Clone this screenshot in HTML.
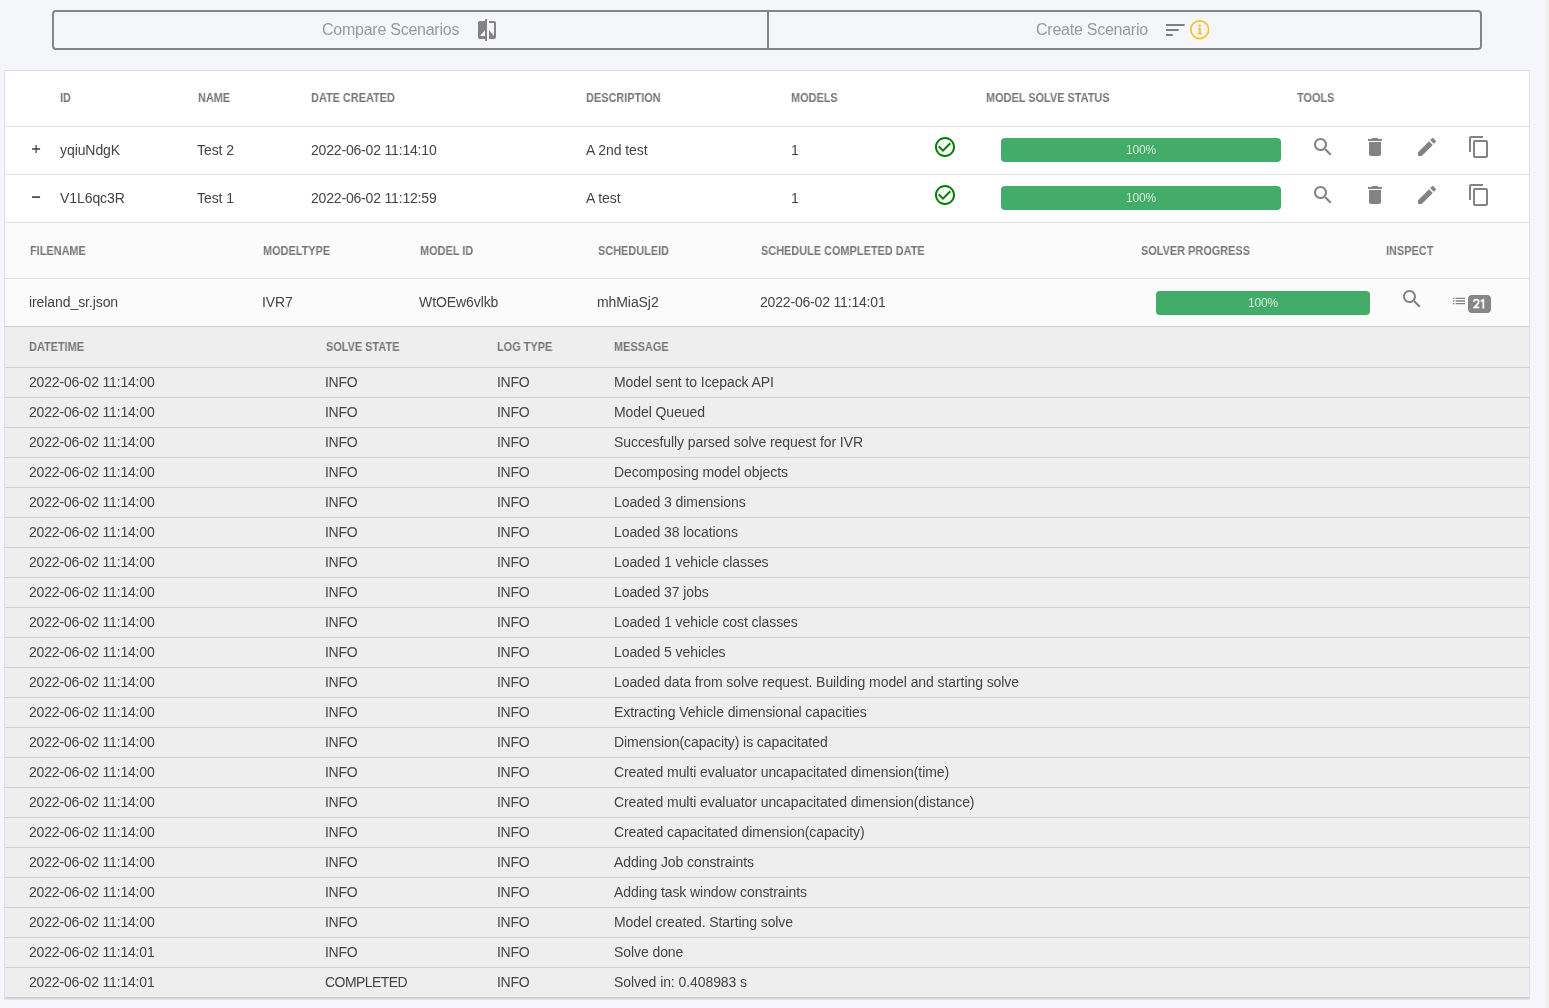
<!DOCTYPE html>
<html><head><meta charset="utf-8">
<style>
html,body{margin:0;padding:0;}
body{width:1549px;height:1008px;overflow:hidden;background:#f5f6fa;font-family:"Liberation Sans",sans-serif;position:relative;color:#444444;}
.abs{position:absolute;}
.sb{position:absolute;left:1545px;top:0;width:4px;height:1008px;background:#efefef;}
.btnbox{position:absolute;left:52px;top:10px;width:1426px;height:36px;border:2px solid #848484;border-radius:4px;}
.divider{position:absolute;left:767px;top:10px;width:2px;height:40px;background:#848484;}
.btxt{will-change:transform;position:absolute;top:10px;height:40px;line-height:40px;font-size:16px;color:#9a9a9a;white-space:nowrap;letter-spacing:-0.25px;}
.card{position:absolute;left:4px;top:70px;width:1524px;height:927px;border:1px solid #dde1e6;border-bottom-color:#d9d9d9;box-shadow:0 1px 0 #e6e7ea;background:#fff;}
.line{position:absolute;left:5px;width:1524px;height:1px;}
.h{will-change:transform;position:absolute;font-size:12px;line-height:14px;font-weight:700;color:#777777;white-space:nowrap;transform-origin:0 0;}
.t{will-change:transform;position:absolute;font-size:14px;color:#444444;white-space:nowrap;}
.pb{will-change:transform;position:absolute;background:#43ac6a;border-radius:4px;color:#d4ecdc;font-size:12px;text-align:center;letter-spacing:-0.2px;}
</style></head><body>
<div class="sb"></div>
<div class="btnbox"></div><div class="divider"></div>
<div class="btxt" style="left:322px;">Compare Scenarios</div>
<svg class="abs" style="left:475.4px;top:18px;width:24px;height:24px;fill:#838383" viewBox="0 0 24 24"><path d="M10 3H5c-1.11 0-2 .89-2 2v14c0 1.1.89 2 2 2h5v2h2V1h-2v2zm0 15H5l5-6v6zm9-15h-5v2h5v13l-5-6v9h5c1.1 0 2-.9 2-2V5c0-1.1-.9-2-2-2z"/></svg>
<div class="btxt" style="left:1036px;">Create Scenario</div>
<svg class="abs" style="left:1163px;top:18px;width:24px;height:24px;fill:#808080" viewBox="0 0 24 24"><path d="M3 18h6.8v-2H3v2zM3 6v2h18.6V6H3zm0 7h12.7v-2H3v2z"/></svg>
<svg class="abs" style="left:1188.3px;top:17.8px;width:23.4px;height:23.4px;fill:#fbc02d" viewBox="0 0 24 24"><circle cx="12" cy="12" r="9.1" fill="none" stroke="#fbc02d" stroke-width="1.8"/><circle cx="12" cy="7.9" r="1.3"/><path d="M10.3 10.1h2.8v5.2h1.2v1.6h-4.4v-1.6h1.1v-3.6h-0.7z"/></svg>
<div class="card"></div>
<div class="h" style="left:60px;top:91px;transform:scaleX(0.91)">ID</div>
<div class="h" style="left:198px;top:91px;transform:scaleX(0.91)">NAME</div>
<div class="h" style="left:311px;top:91px;transform:scaleX(0.91)">DATE CREATED</div>
<div class="h" style="left:586px;top:91px;transform:scaleX(0.91)">DESCRIPTION</div>
<div class="h" style="left:791px;top:91px;transform:scaleX(0.91)">MODELS</div>
<div class="h" style="left:986px;top:91px;transform:scaleX(0.91)">MODEL SOLVE STATUS</div>
<div class="h" style="left:1297px;top:91px;transform:scaleX(0.91)">TOOLS</div>
<div class="line" style="top:126px;background:#e0e0e0"></div>
<svg class="abs" style="left:30px;top:143px;width:12px;height:12px" viewBox="0 0 12 12"><path d="M2.1 6H10.1" stroke="#3a3a3a" stroke-width="1.5" fill="none"/><path d="M6.1 2V10" stroke="#3a3a3a" stroke-width="1.2" fill="none"/></svg>
<div class="t" style="left:60px;top:126px;line-height:48px;letter-spacing:-0.08px;">yqiuNdgK</div>
<div class="t" style="left:197px;top:126px;line-height:48px;letter-spacing:-0.08px;">Test 2</div>
<div class="t" style="left:311px;top:126px;line-height:48px;letter-spacing:-0.18px;">2022-06-02 11:14:10</div>
<div class="t" style="left:586px;top:126px;line-height:48px;letter-spacing:-0.08px;">A 2nd test</div>
<div class="t" style="left:791px;top:126px;line-height:48px;">1</div>
<svg class="abs" style="left:933px;top:135px;width:24px;height:24px;fill:#008000" viewBox="0 0 24 24"><path d="M16.59 7.58L10 14.17l-3.59-3.58L5 12l5 5 8-8zM12 2C6.48 2 2 6.48 2 12s4.48 10 10 10 10-4.48 10-10S17.52 2 12 2zm0 18c-4.42 0-8-3.58-8-8s3.58-8 8-8 8 3.58 8 8-3.58 8-8 8z"/></svg>
<div class="pb" style="left:1001px;top:138px;width:280px;height:24px;line-height:24px;">100%</div>
<svg class="abs" style="left:1311px;top:135px;width:24px;height:24px;fill:#838383" viewBox="0 0 24 24"><path d="M15.5 14h-.79l-.28-.27C15.41 12.59 16 11.11 16 9.5 16 5.91 13.09 3 9.5 3S3 5.91 3 9.5 5.91 16 9.5 16c1.61 0 3.09-.59 4.23-1.57l.27.28v.79l5 4.99L20.49 19l-4.99-5zm-6 0C7.01 14 5 11.990 5 9.5S7.01 5 9.5 5 14 7.01 14 9.5 11.99 14 9.5 14z"/></svg>
<svg class="abs" style="left:1363px;top:135px;width:24px;height:24px;fill:#838383" viewBox="0 0 24 24"><path d="M6 19c0 1.1.9 2 2 2h8c1.1 0 2-.9 2-2V7H6v12zM19 4h-3.5l-1-1h-5l-1 1H5v2h14V4z"/></svg>
<svg class="abs" style="left:1415px;top:135px;width:24px;height:24px;fill:#838383" viewBox="0 0 24 24"><path d="M3 17.25V21h3.75L17.81 9.94l-3.75-3.75L3 17.25zM20.71 7.04c.39-.39.39-1.02 0-1.41l-2.34-2.34c-.39-.39-1.02-.39-1.41 0l-1.83 1.83 3.75 3.75 1.83-1.83z"/></svg>
<svg class="abs" style="left:1467px;top:135px;width:24px;height:24px;fill:#838383" viewBox="0 0 24 24"><path d="M16 1H4c-1.1 0-2 .9-2 2v14h2V3h12V1zm3 4H8c-1.1 0-2 .9-2 2v14c0 1.1.9 2 2 2h11c1.1 0 2-.9 2-2V7c0-1.1-.9-2-2-2zm0 16H8V7h11v14z"/></svg>
<div class="line" style="top:174px;background:#e0e0e0"></div>
<svg class="abs" style="left:30px;top:191px;width:12px;height:12px" viewBox="0 0 12 12"><path d="M2.1 6.1H10.1" stroke="#444" stroke-width="1.7" fill="none"/></svg>
<div class="t" style="left:60px;top:174px;line-height:48px;letter-spacing:-0.08px;">V1L6qc3R</div>
<div class="t" style="left:197px;top:174px;line-height:48px;letter-spacing:-0.08px;">Test 1</div>
<div class="t" style="left:311px;top:174px;line-height:48px;letter-spacing:-0.18px;">2022-06-02 11:12:59</div>
<div class="t" style="left:586px;top:174px;line-height:48px;letter-spacing:-0.08px;">A test</div>
<div class="t" style="left:791px;top:174px;line-height:48px;">1</div>
<svg class="abs" style="left:933px;top:183px;width:24px;height:24px;fill:#008000" viewBox="0 0 24 24"><path d="M16.59 7.58L10 14.17l-3.59-3.58L5 12l5 5 8-8zM12 2C6.48 2 2 6.48 2 12s4.48 10 10 10 10-4.48 10-10S17.52 2 12 2zm0 18c-4.42 0-8-3.58-8-8s3.58-8 8-8 8 3.58 8 8-3.58 8-8 8z"/></svg>
<div class="pb" style="left:1001px;top:186px;width:280px;height:24px;line-height:24px;">100%</div>
<svg class="abs" style="left:1311px;top:183px;width:24px;height:24px;fill:#838383" viewBox="0 0 24 24"><path d="M15.5 14h-.79l-.28-.27C15.41 12.59 16 11.11 16 9.5 16 5.91 13.09 3 9.5 3S3 5.91 3 9.5 5.91 16 9.5 16c1.61 0 3.09-.59 4.23-1.57l.27.28v.79l5 4.99L20.49 19l-4.99-5zm-6 0C7.01 14 5 11.990 5 9.5S7.01 5 9.5 5 14 7.01 14 9.5 11.99 14 9.5 14z"/></svg>
<svg class="abs" style="left:1363px;top:183px;width:24px;height:24px;fill:#838383" viewBox="0 0 24 24"><path d="M6 19c0 1.1.9 2 2 2h8c1.1 0 2-.9 2-2V7H6v12zM19 4h-3.5l-1-1h-5l-1 1H5v2h14V4z"/></svg>
<svg class="abs" style="left:1415px;top:183px;width:24px;height:24px;fill:#838383" viewBox="0 0 24 24"><path d="M3 17.25V21h3.75L17.81 9.94l-3.75-3.75L3 17.25zM20.71 7.04c.39-.39.39-1.02 0-1.41l-2.34-2.34c-.39-.39-1.02-.39-1.41 0l-1.83 1.83 3.75 3.75 1.83-1.83z"/></svg>
<svg class="abs" style="left:1467px;top:183px;width:24px;height:24px;fill:#838383" viewBox="0 0 24 24"><path d="M16 1H4c-1.1 0-2 .9-2 2v14h2V3h12V1zm3 4H8c-1.1 0-2 .9-2 2v14c0 1.1.9 2 2 2h11c1.1 0 2-.9 2-2V7c0-1.1-.9-2-2-2zm0 16H8V7h11v14z"/></svg>
<div class="line" style="top:222px;background:#e0e0e0"></div>
<div class="abs" style="left:5px;top:223px;width:1524px;height:103px;background:#fbfbfb;"></div>
<div class="h" style="left:30px;top:244px;transform:scaleX(0.91)">FILENAME</div>
<div class="h" style="left:263px;top:244px;transform:scaleX(0.91)">MODELTYPE</div>
<div class="h" style="left:420px;top:244px;transform:scaleX(0.91)">MODEL ID</div>
<div class="h" style="left:598px;top:244px;transform:scaleX(0.91)">SCHEDULEID</div>
<div class="h" style="left:761px;top:244px;transform:scaleX(0.91)">SCHEDULE COMPLETED DATE</div>
<div class="h" style="left:1141px;top:244px;transform:scaleX(0.91)">SOLVER PROGRESS</div>
<div class="h" style="left:1386px;top:244px;transform:scaleX(0.91)">INSPECT</div>
<div class="line" style="top:278px;background:#e0e0e0"></div>
<div class="t" style="left:29px;top:278px;line-height:48px;letter-spacing:-0.08px;">ireland_sr.json</div>
<div class="t" style="left:262px;top:278px;line-height:48px;letter-spacing:-0.08px;">IVR7</div>
<div class="t" style="left:419px;top:278px;line-height:48px;letter-spacing:-0.08px;">WtOEw6vlkb</div>
<div class="t" style="left:597px;top:278px;line-height:48px;letter-spacing:-0.08px;">mhMiaSj2</div>
<div class="t" style="left:760px;top:278px;line-height:48px;letter-spacing:-0.18px;">2022-06-02 11:14:01</div>
<div class="pb" style="left:1156px;top:291px;width:214px;height:24px;line-height:24px;">100%</div>
<svg class="abs" style="left:1399.5px;top:287px;width:24px;height:24px;fill:#838383" viewBox="0 0 24 24"><path d="M15.5 14h-.79l-.28-.27C15.41 12.59 16 11.11 16 9.5 16 5.91 13.09 3 9.5 3S3 5.91 3 9.5 5.91 16 9.5 16c1.61 0 3.09-.59 4.23-1.57l.27.28v.79l5 4.99L20.49 19l-4.99-5zm-6 0C7.01 14 5 11.990 5 9.5S7.01 5 9.5 5 14 7.01 14 9.5 11.99 14 9.5 14z"/></svg>
<svg class="abs" style="left:1451.3px;top:293px;width:16px;height:16px;fill:#838383" viewBox="0 0 24 24"><path d="M3 13h2v-2H3v2zm0 4h2v-2H3v2zm0-8h2V7H3v2zm4 4h14v-2H7v2zm0 4h14v-2H7v2zM7 7v2h14V7H7z"/></svg>
<div class="abs" style="left:1468px;top:295px;width:23px;height:18px;border-radius:4px;background:#878787;"></div>
<svg class="abs" style="left:1468px;top:295px;width:23px;height:18px" viewBox="0 0 23 18"><g transform="translate(0.2 0.7)"><path d="M5.6 6.3C5.6 4.8 6.6 3.9 8.1 3.9C9.6 3.9 10.5 4.8 10.5 6.0C10.5 7.0 10.0 7.6 9.2 8.5L6.3 11.7H11.1" fill="none" stroke="#fff" stroke-width="1.75" stroke-linejoin="miter"/><path d="M12.5 5.6L15.1 4.2V12.9" fill="none" stroke="#fff" stroke-width="1.8"/></g></svg>
<div class="line" style="top:326px;background:#d0d0d0"></div>
<div class="abs" style="left:5px;top:327px;width:1524px;height:670px;background:#eeeeee;"></div>
<div class="h" style="left:29px;top:340px;transform:scaleX(0.91)">DATETIME</div>
<div class="h" style="left:326px;top:340px;transform:scaleX(0.91)">SOLVE STATE</div>
<div class="h" style="left:497px;top:340px;transform:scaleX(0.91)">LOG TYPE</div>
<div class="h" style="left:614px;top:340px;transform:scaleX(0.91)">MESSAGE</div>
<div class="line" style="top:367px;background:#d0d0d0"></div>
<div class="t" style="left:29px;top:367px;line-height:30px;letter-spacing:-0.18px;">2022-06-02 11:14:00</div>
<div class="t" style="left:325px;top:367px;line-height:30px;letter-spacing:-0.3px;">INFO</div>
<div class="t" style="left:497px;top:367px;line-height:30px;letter-spacing:-0.3px;">INFO</div>
<div class="t" style="left:614px;top:367px;line-height:30px;letter-spacing:-0.08px;">Model sent to Icepack API</div>
<div class="line" style="top:397px;background:#d0d0d0"></div>
<div class="t" style="left:29px;top:397px;line-height:30px;letter-spacing:-0.18px;">2022-06-02 11:14:00</div>
<div class="t" style="left:325px;top:397px;line-height:30px;letter-spacing:-0.3px;">INFO</div>
<div class="t" style="left:497px;top:397px;line-height:30px;letter-spacing:-0.3px;">INFO</div>
<div class="t" style="left:614px;top:397px;line-height:30px;letter-spacing:-0.08px;">Model Queued</div>
<div class="line" style="top:427px;background:#d0d0d0"></div>
<div class="t" style="left:29px;top:427px;line-height:30px;letter-spacing:-0.18px;">2022-06-02 11:14:00</div>
<div class="t" style="left:325px;top:427px;line-height:30px;letter-spacing:-0.3px;">INFO</div>
<div class="t" style="left:497px;top:427px;line-height:30px;letter-spacing:-0.3px;">INFO</div>
<div class="t" style="left:614px;top:427px;line-height:30px;letter-spacing:-0.08px;">Succesfully parsed solve request for IVR</div>
<div class="line" style="top:457px;background:#d0d0d0"></div>
<div class="t" style="left:29px;top:457px;line-height:30px;letter-spacing:-0.18px;">2022-06-02 11:14:00</div>
<div class="t" style="left:325px;top:457px;line-height:30px;letter-spacing:-0.3px;">INFO</div>
<div class="t" style="left:497px;top:457px;line-height:30px;letter-spacing:-0.3px;">INFO</div>
<div class="t" style="left:614px;top:457px;line-height:30px;letter-spacing:-0.08px;">Decomposing model objects</div>
<div class="line" style="top:487px;background:#d0d0d0"></div>
<div class="t" style="left:29px;top:487px;line-height:30px;letter-spacing:-0.18px;">2022-06-02 11:14:00</div>
<div class="t" style="left:325px;top:487px;line-height:30px;letter-spacing:-0.3px;">INFO</div>
<div class="t" style="left:497px;top:487px;line-height:30px;letter-spacing:-0.3px;">INFO</div>
<div class="t" style="left:614px;top:487px;line-height:30px;letter-spacing:-0.08px;">Loaded 3 dimensions</div>
<div class="line" style="top:517px;background:#d0d0d0"></div>
<div class="t" style="left:29px;top:517px;line-height:30px;letter-spacing:-0.18px;">2022-06-02 11:14:00</div>
<div class="t" style="left:325px;top:517px;line-height:30px;letter-spacing:-0.3px;">INFO</div>
<div class="t" style="left:497px;top:517px;line-height:30px;letter-spacing:-0.3px;">INFO</div>
<div class="t" style="left:614px;top:517px;line-height:30px;letter-spacing:-0.08px;">Loaded 38 locations</div>
<div class="line" style="top:547px;background:#d0d0d0"></div>
<div class="t" style="left:29px;top:547px;line-height:30px;letter-spacing:-0.18px;">2022-06-02 11:14:00</div>
<div class="t" style="left:325px;top:547px;line-height:30px;letter-spacing:-0.3px;">INFO</div>
<div class="t" style="left:497px;top:547px;line-height:30px;letter-spacing:-0.3px;">INFO</div>
<div class="t" style="left:614px;top:547px;line-height:30px;letter-spacing:-0.08px;">Loaded 1 vehicle classes</div>
<div class="line" style="top:577px;background:#d0d0d0"></div>
<div class="t" style="left:29px;top:577px;line-height:30px;letter-spacing:-0.18px;">2022-06-02 11:14:00</div>
<div class="t" style="left:325px;top:577px;line-height:30px;letter-spacing:-0.3px;">INFO</div>
<div class="t" style="left:497px;top:577px;line-height:30px;letter-spacing:-0.3px;">INFO</div>
<div class="t" style="left:614px;top:577px;line-height:30px;letter-spacing:-0.08px;">Loaded 37 jobs</div>
<div class="line" style="top:607px;background:#d0d0d0"></div>
<div class="t" style="left:29px;top:607px;line-height:30px;letter-spacing:-0.18px;">2022-06-02 11:14:00</div>
<div class="t" style="left:325px;top:607px;line-height:30px;letter-spacing:-0.3px;">INFO</div>
<div class="t" style="left:497px;top:607px;line-height:30px;letter-spacing:-0.3px;">INFO</div>
<div class="t" style="left:614px;top:607px;line-height:30px;letter-spacing:-0.08px;">Loaded 1 vehicle cost classes</div>
<div class="line" style="top:637px;background:#d0d0d0"></div>
<div class="t" style="left:29px;top:637px;line-height:30px;letter-spacing:-0.18px;">2022-06-02 11:14:00</div>
<div class="t" style="left:325px;top:637px;line-height:30px;letter-spacing:-0.3px;">INFO</div>
<div class="t" style="left:497px;top:637px;line-height:30px;letter-spacing:-0.3px;">INFO</div>
<div class="t" style="left:614px;top:637px;line-height:30px;letter-spacing:-0.08px;">Loaded 5 vehicles</div>
<div class="line" style="top:667px;background:#d0d0d0"></div>
<div class="t" style="left:29px;top:667px;line-height:30px;letter-spacing:-0.18px;">2022-06-02 11:14:00</div>
<div class="t" style="left:325px;top:667px;line-height:30px;letter-spacing:-0.3px;">INFO</div>
<div class="t" style="left:497px;top:667px;line-height:30px;letter-spacing:-0.3px;">INFO</div>
<div class="t" style="left:614px;top:667px;line-height:30px;letter-spacing:-0.08px;">Loaded data from solve request. Building model and starting solve</div>
<div class="line" style="top:697px;background:#d0d0d0"></div>
<div class="t" style="left:29px;top:697px;line-height:30px;letter-spacing:-0.18px;">2022-06-02 11:14:00</div>
<div class="t" style="left:325px;top:697px;line-height:30px;letter-spacing:-0.3px;">INFO</div>
<div class="t" style="left:497px;top:697px;line-height:30px;letter-spacing:-0.3px;">INFO</div>
<div class="t" style="left:614px;top:697px;line-height:30px;letter-spacing:-0.08px;">Extracting Vehicle dimensional capacities</div>
<div class="line" style="top:727px;background:#d0d0d0"></div>
<div class="t" style="left:29px;top:727px;line-height:30px;letter-spacing:-0.18px;">2022-06-02 11:14:00</div>
<div class="t" style="left:325px;top:727px;line-height:30px;letter-spacing:-0.3px;">INFO</div>
<div class="t" style="left:497px;top:727px;line-height:30px;letter-spacing:-0.3px;">INFO</div>
<div class="t" style="left:614px;top:727px;line-height:30px;letter-spacing:-0.08px;">Dimension(capacity) is capacitated</div>
<div class="line" style="top:757px;background:#d0d0d0"></div>
<div class="t" style="left:29px;top:757px;line-height:30px;letter-spacing:-0.18px;">2022-06-02 11:14:00</div>
<div class="t" style="left:325px;top:757px;line-height:30px;letter-spacing:-0.3px;">INFO</div>
<div class="t" style="left:497px;top:757px;line-height:30px;letter-spacing:-0.3px;">INFO</div>
<div class="t" style="left:614px;top:757px;line-height:30px;letter-spacing:-0.08px;">Created multi evaluator uncapacitated dimension(time)</div>
<div class="line" style="top:787px;background:#d0d0d0"></div>
<div class="t" style="left:29px;top:787px;line-height:30px;letter-spacing:-0.18px;">2022-06-02 11:14:00</div>
<div class="t" style="left:325px;top:787px;line-height:30px;letter-spacing:-0.3px;">INFO</div>
<div class="t" style="left:497px;top:787px;line-height:30px;letter-spacing:-0.3px;">INFO</div>
<div class="t" style="left:614px;top:787px;line-height:30px;letter-spacing:-0.08px;">Created multi evaluator uncapacitated dimension(distance)</div>
<div class="line" style="top:817px;background:#d0d0d0"></div>
<div class="t" style="left:29px;top:817px;line-height:30px;letter-spacing:-0.18px;">2022-06-02 11:14:00</div>
<div class="t" style="left:325px;top:817px;line-height:30px;letter-spacing:-0.3px;">INFO</div>
<div class="t" style="left:497px;top:817px;line-height:30px;letter-spacing:-0.3px;">INFO</div>
<div class="t" style="left:614px;top:817px;line-height:30px;letter-spacing:-0.08px;">Created capacitated dimension(capacity)</div>
<div class="line" style="top:847px;background:#d0d0d0"></div>
<div class="t" style="left:29px;top:847px;line-height:30px;letter-spacing:-0.18px;">2022-06-02 11:14:00</div>
<div class="t" style="left:325px;top:847px;line-height:30px;letter-spacing:-0.3px;">INFO</div>
<div class="t" style="left:497px;top:847px;line-height:30px;letter-spacing:-0.3px;">INFO</div>
<div class="t" style="left:614px;top:847px;line-height:30px;letter-spacing:-0.08px;">Adding Job constraints</div>
<div class="line" style="top:877px;background:#d0d0d0"></div>
<div class="t" style="left:29px;top:877px;line-height:30px;letter-spacing:-0.18px;">2022-06-02 11:14:00</div>
<div class="t" style="left:325px;top:877px;line-height:30px;letter-spacing:-0.3px;">INFO</div>
<div class="t" style="left:497px;top:877px;line-height:30px;letter-spacing:-0.3px;">INFO</div>
<div class="t" style="left:614px;top:877px;line-height:30px;letter-spacing:-0.08px;">Adding task window constraints</div>
<div class="line" style="top:907px;background:#d0d0d0"></div>
<div class="t" style="left:29px;top:907px;line-height:30px;letter-spacing:-0.18px;">2022-06-02 11:14:00</div>
<div class="t" style="left:325px;top:907px;line-height:30px;letter-spacing:-0.3px;">INFO</div>
<div class="t" style="left:497px;top:907px;line-height:30px;letter-spacing:-0.3px;">INFO</div>
<div class="t" style="left:614px;top:907px;line-height:30px;letter-spacing:-0.08px;">Model created. Starting solve</div>
<div class="line" style="top:937px;background:#d0d0d0"></div>
<div class="t" style="left:29px;top:937px;line-height:30px;letter-spacing:-0.18px;">2022-06-02 11:14:01</div>
<div class="t" style="left:325px;top:937px;line-height:30px;letter-spacing:-0.3px;">INFO</div>
<div class="t" style="left:497px;top:937px;line-height:30px;letter-spacing:-0.3px;">INFO</div>
<div class="t" style="left:614px;top:937px;line-height:30px;letter-spacing:-0.08px;">Solve done</div>
<div class="line" style="top:967px;background:#d0d0d0"></div>
<div class="t" style="left:29px;top:967px;line-height:30px;letter-spacing:-0.18px;">2022-06-02 11:14:01</div>
<div class="t" style="left:325px;top:967px;line-height:30px;letter-spacing:-0.55px;">COMPLETED</div>
<div class="t" style="left:497px;top:967px;line-height:30px;letter-spacing:-0.3px;">INFO</div>
<div class="t" style="left:614px;top:967px;line-height:30px;letter-spacing:-0.08px;">Solved in: 0.408983 s</div>
<div class="line" style="top:997px;background:#d0d0d0"></div>
</body></html>
